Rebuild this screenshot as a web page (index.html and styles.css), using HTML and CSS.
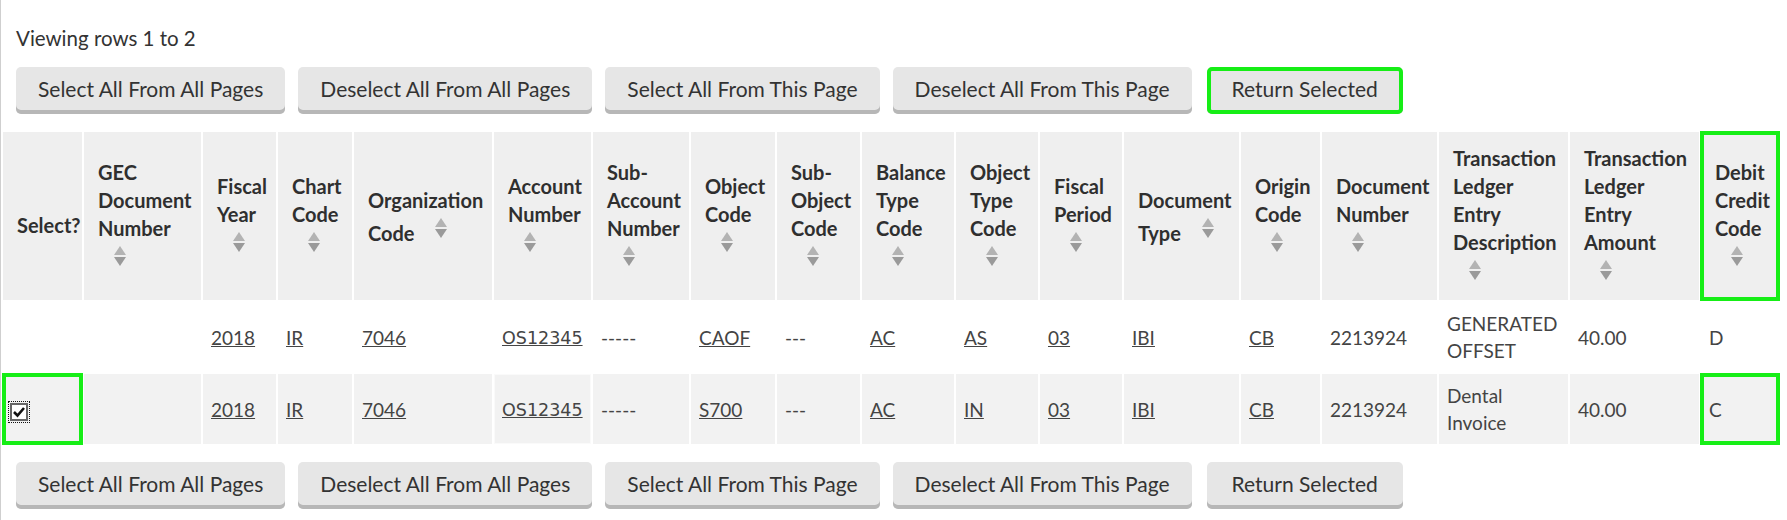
FILE: index.html
```html
<!DOCTYPE html>
<html lang="en">
<head>
<meta charset="utf-8">
<title>Lookup Results</title>
<link rel="stylesheet" href="styles.css">
</head>
<body>
<div class="page">
  <div class="info">Viewing rows 1 to 2</div>
  <div class="btnbar">
    <button class="btn">Select All From All Pages</button>
    <button class="btn">Deselect All From All Pages</button>
    <button class="btn">Select All From This Page</button>
    <button class="btn">Deselect All From This Page</button>
    <button class="btn btn-return hl-btn">Return Selected</button>
  </div>

  <table class="results">
    <colgroup>
      <col style="width:79px"><col style="width:117px"><col style="width:73px"><col style="width:74px">
      <col style="width:138px"><col style="width:97px"><col style="width:96px"><col style="width:84px">
      <col style="width:83px"><col style="width:92px"><col style="width:82px"><col style="width:82px">
      <col style="width:115px"><col style="width:79px"><col style="width:115px"><col style="width:129px">
      <col style="width:129px"><col style="width:78px">
    </colgroup>
    <thead>
      <tr>
        <th class="sel-head">Select?</th>
        <th>GEC Document Number <span class="sort"><svg width="12" height="20" viewBox="0 0 12 20"><path d="M6 0 L12 9 L0 9 Z" fill="#b3b3b3"/><path d="M0 11 L12 11 L6 20 Z" fill="#9a9a9a"/></svg></span></th>
        <th>Fiscal Year <span class="sort"><svg width="12" height="20" viewBox="0 0 12 20"><path d="M6 0 L12 9 L0 9 Z" fill="#b3b3b3"/><path d="M0 11 L12 11 L6 20 Z" fill="#9a9a9a"/></svg></span></th>
        <th>Chart Code <span class="sort"><svg width="12" height="20" viewBox="0 0 12 20"><path d="M6 0 L12 9 L0 9 Z" fill="#b3b3b3"/><path d="M0 11 L12 11 L6 20 Z" fill="#9a9a9a"/></svg></span></th>
        <th>Organization Code <span class="sort"><svg width="12" height="20" viewBox="0 0 12 20"><path d="M6 0 L12 9 L0 9 Z" fill="#b3b3b3"/><path d="M0 11 L12 11 L6 20 Z" fill="#9a9a9a"/></svg></span></th>
        <th>Account Number <span class="sort"><svg width="12" height="20" viewBox="0 0 12 20"><path d="M6 0 L12 9 L0 9 Z" fill="#b3b3b3"/><path d="M0 11 L12 11 L6 20 Z" fill="#9a9a9a"/></svg></span></th>
        <th>Sub-Account Number <span class="sort"><svg width="12" height="20" viewBox="0 0 12 20"><path d="M6 0 L12 9 L0 9 Z" fill="#b3b3b3"/><path d="M0 11 L12 11 L6 20 Z" fill="#9a9a9a"/></svg></span></th>
        <th>Object Code <span class="sort"><svg width="12" height="20" viewBox="0 0 12 20"><path d="M6 0 L12 9 L0 9 Z" fill="#b3b3b3"/><path d="M0 11 L12 11 L6 20 Z" fill="#9a9a9a"/></svg></span></th>
        <th>Sub-Object Code <span class="sort"><svg width="12" height="20" viewBox="0 0 12 20"><path d="M6 0 L12 9 L0 9 Z" fill="#b3b3b3"/><path d="M0 11 L12 11 L6 20 Z" fill="#9a9a9a"/></svg></span></th>
        <th>Balance Type Code <span class="sort"><svg width="12" height="20" viewBox="0 0 12 20"><path d="M6 0 L12 9 L0 9 Z" fill="#b3b3b3"/><path d="M0 11 L12 11 L6 20 Z" fill="#9a9a9a"/></svg></span></th>
        <th>Object Type Code <span class="sort"><svg width="12" height="20" viewBox="0 0 12 20"><path d="M6 0 L12 9 L0 9 Z" fill="#b3b3b3"/><path d="M0 11 L12 11 L6 20 Z" fill="#9a9a9a"/></svg></span></th>
        <th>Fiscal Period <span class="sort"><svg width="12" height="20" viewBox="0 0 12 20"><path d="M6 0 L12 9 L0 9 Z" fill="#b3b3b3"/><path d="M0 11 L12 11 L6 20 Z" fill="#9a9a9a"/></svg></span></th>
        <th>Document Type <span class="sort"><svg width="12" height="20" viewBox="0 0 12 20"><path d="M6 0 L12 9 L0 9 Z" fill="#b3b3b3"/><path d="M0 11 L12 11 L6 20 Z" fill="#9a9a9a"/></svg></span></th>
        <th>Origin Code <span class="sort"><svg width="12" height="20" viewBox="0 0 12 20"><path d="M6 0 L12 9 L0 9 Z" fill="#b3b3b3"/><path d="M0 11 L12 11 L6 20 Z" fill="#9a9a9a"/></svg></span></th>
        <th>Document Number <span class="sort"><svg width="12" height="20" viewBox="0 0 12 20"><path d="M6 0 L12 9 L0 9 Z" fill="#b3b3b3"/><path d="M0 11 L12 11 L6 20 Z" fill="#9a9a9a"/></svg></span></th>
        <th>Transaction Ledger Entry Description <span class="sort"><svg width="12" height="20" viewBox="0 0 12 20"><path d="M6 0 L12 9 L0 9 Z" fill="#b3b3b3"/><path d="M0 11 L12 11 L6 20 Z" fill="#9a9a9a"/></svg></span></th>
        <th class="narrow">Transaction Ledger Entry Amount <span class="sort"><svg width="12" height="20" viewBox="0 0 12 20"><path d="M6 0 L12 9 L0 9 Z" fill="#b3b3b3"/><path d="M0 11 L12 11 L6 20 Z" fill="#9a9a9a"/></svg></span></th>
        <th class="hl">Debit Credit Code <span class="sort"><svg width="12" height="20" viewBox="0 0 12 20"><path d="M6 0 L12 9 L0 9 Z" fill="#b3b3b3"/><path d="M0 11 L12 11 L6 20 Z" fill="#9a9a9a"/></svg></span></th>
      </tr>
    </thead>
    <tbody>
      <tr class="odd">
        <td></td>
        <td></td>
        <td><a href="#">2018</a></td>
        <td><a href="#">IR</a></td>
        <td><a href="#">7046</a></td>
        <td><a href="#" class="acct">OS12345</a></td>
        <td>-----</td>
        <td><a href="#">CAOF</a></td>
        <td>---</td>
        <td><a href="#">AC</a></td>
        <td><a href="#">AS</a></td>
        <td><a href="#">03</a></td>
        <td><a href="#">IBI</a></td>
        <td><a href="#">CB</a></td>
        <td>2213924</td>
        <td>GENERATED<br>OFFSET</td>
        <td>40.00</td>
        <td>D</td>
      </tr>
      <tr class="even">
        <td class="hl cbcell"><span class="cb"><svg width="14" height="14" viewBox="0 0 14 14"><path d="M2 7 L5.5 10.5 L12 3" fill="none" stroke="#111" stroke-width="2.6"/></svg></span></td>
        <td></td>
        <td><a href="#">2018</a></td>
        <td><a href="#">IR</a></td>
        <td><a href="#">7046</a></td>
        <td class="boxed"><a href="#" class="acct">OS12345</a></td>
        <td>-----</td>
        <td><a href="#">S700</a></td>
        <td>---</td>
        <td><a href="#">AC</a></td>
        <td><a href="#">IN</a></td>
        <td><a href="#">03</a></td>
        <td><a href="#">IBI</a></td>
        <td><a href="#">CB</a></td>
        <td>2213924</td>
        <td>Dental<br>Invoice</td>
        <td>40.00</td>
        <td class="hl">C</td>
      </tr>
    </tbody>
  </table>

  <div class="btnbar bottom">
    <button class="btn">Select All From All Pages</button>
    <button class="btn">Deselect All From All Pages</button>
    <button class="btn">Select All From This Page</button>
    <button class="btn">Deselect All From This Page</button>
    <button class="btn btn-return">Return Selected</button>
  </div>
</div>
</body>
</html>
```

FILE: styles.css
```css
html, body {
  margin: 0;
  padding: 0;
  background: #fff;
}

body {
  font-family: Lato, "Open Sans", "Liberation Sans", sans-serif;
  font-size: 19px;
  color: #333;
}

.page {
  border-left: 1px solid #cfcfcf;
  min-height: 520px;
  box-sizing: border-box;
  padding-top: 26px;
}

.info {
  padding-left: 15px;
  font-size: 20.5px;
  line-height: 24px;
  color: #333;
}

.btnbar {
  display: flex;
  gap: 13px;
  padding-left: 15px;
  margin-top: 17px;
}

.btnbar.bottom {
  margin-top: 16px;
}

.btn {
  font-family: inherit;
  font-size: 21px;
  color: #333;
  height: 47px;
  padding: 0 22px 4px;
  border: none;
  border-radius: 5px;
  background: #e6e6e6;
  box-shadow: inset 0 -4px 0 #b7b7b7;
  cursor: pointer;
}

.btn-return {
  margin-left: 2px;
  padding: 0 25px 4px;
}

.hl-btn {
  outline: 4px solid #16ee16;
  outline-offset: -4px;
}

.results {
  margin-top: 16px;
  width: 1780px;
  table-layout: fixed;
  border-collapse: separate;
  border-spacing: 2px;
}

.results th {
  background: #efefef;
  font-size: 20px;
  font-weight: 700;
  text-align: left;
  vertical-align: middle;
  line-height: 28px;
  padding: 6px 8px 6px 14px;
  color: #2f2f2f;
}

.results th.sel-head {
  padding-top: 24px;
  padding-right: 4px;
}

.results th.narrow {
  padding-right: 20px;
}

.results thead tr {
  height: 168px;
}

.sort {
  display: inline-block;
  width: 12px;
  height: 20px;
  margin-left: 16px;
  margin-top: 4px;
  vertical-align: 3px;
}

.sort svg {
  display: block;
}

.results td {
  vertical-align: middle;
  line-height: 27px;
  padding: 4px 4px 4px 8px;
  color: #444;
}

.results tbody tr {
  height: 70px;
}

.results tr.odd td {
  background: #fff;
}

.results tr.even td {
  background: #f2f2f2;
}

.results a {
  color: #444;
  text-decoration: underline;
}

.results a.acct {
  font-family: "DejaVu Sans", Verdana, sans-serif;
  font-size: 17.5px;
  color: #454545;
}

.results td.boxed {
  box-shadow: inset 0 0 0 1px #fafafa;
}

.hl {
  outline: 4px solid #16ee16;
  outline-offset: -3px;
}

.results td.cbcell {
  padding-left: 7px;
}

.cb {
  display: inline-block;
  width: 14px;
  height: 14px;
  border: 2px solid #666;
  background: #fff;
  outline: 1px dotted #111;
  outline-offset: 1px;
  vertical-align: middle;
}

.cb svg {
  display: block;
}
```
